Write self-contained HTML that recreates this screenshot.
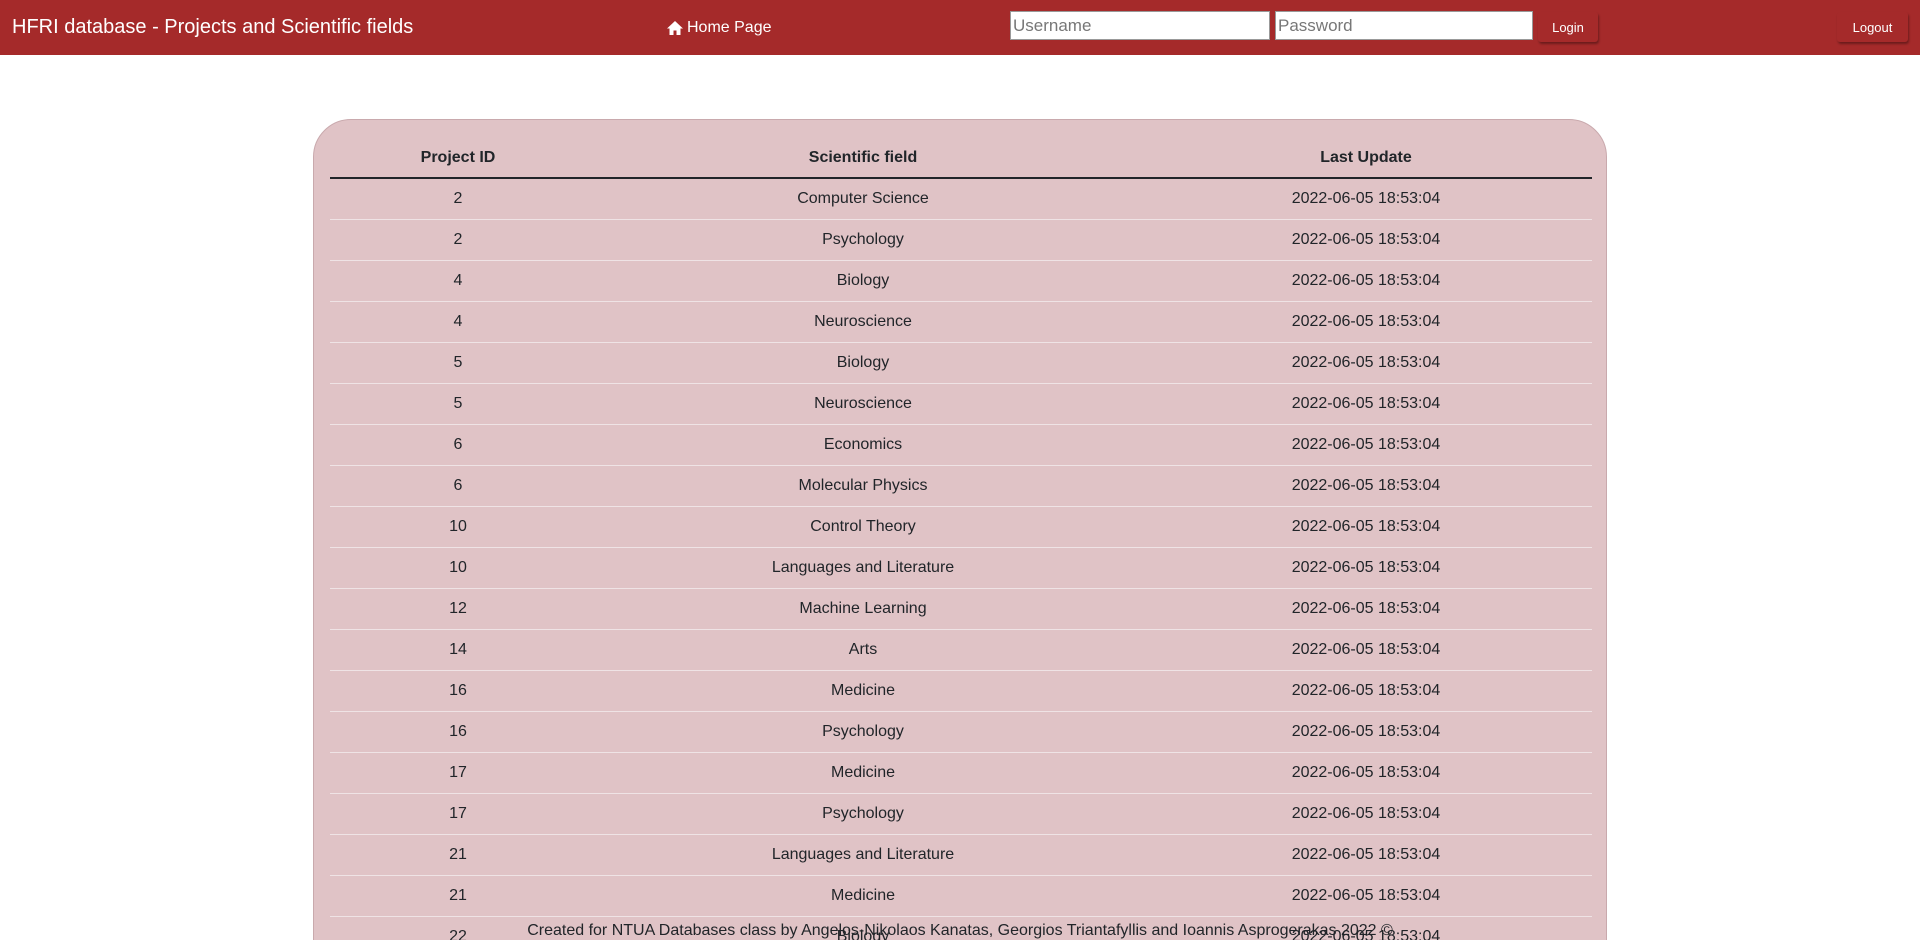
<!DOCTYPE html>
<html style="overflow:hidden;height:940px"><head><meta charset="utf-8"><style>
*{box-sizing:border-box}
body{margin:0;width:1920px;height:940px;overflow:hidden;background:#fff;font-family:"Liberation Sans",sans-serif;color:#212529;position:relative}
.nav{position:absolute;left:0;top:0;width:1920px;height:55px;background:#a52a2a;color:#fff}
.title{position:absolute;left:12px;top:16px;font-size:20px}
.home{position:absolute;left:666px;top:19px;font-size:16px;display:flex;align-items:center;gap:3px}
.inp{position:absolute;top:11px;height:29px;background:#fff;border:1px solid #999;font-size:17px;color:#777;padding:4px 2px;line-height:20px}
.btn{position:absolute;top:12px;height:30px;background:#a52a2a;color:#fff;font-size:13px;text-align:center;line-height:31px;border-radius:3px;box-shadow:1px 2px 2px rgba(0,0,0,.35)}
.box{position:absolute;left:313px;top:119px;width:1294px;height:900px;background:#e0c3c6;border:1px solid #c9a9ad;border-radius:38px}
table{position:absolute;left:16px;top:0;width:1262px;border-collapse:collapse;font-size:16px}
th{height:58px;padding-top:20px;font-weight:bold;border-bottom:2px solid #212529}
td{height:41px;text-align:center;border-bottom:1px solid #efe3e5}
.foot{position:absolute;left:0;width:1920px;top:922px;text-align:center;font-size:16px;color:#212529}
</style></head><body>
<div class="nav">
<div class="title">HFRI database - Projects and Scientific fields</div>
<div class="home"><svg width="18" height="16" viewBox="0 0 18 16"><path d="M9 1L1 8.5h2.5V15h4v-4.5h3V15h4V8.5H17z" fill="#fff"/></svg>Home Page</div>
<div class="inp" style="left:1010px;width:260px">Username</div>
<div class="inp" style="left:1275px;width:258px">Password</div>
<div class="btn" style="left:1538px;width:60px">Login</div>
<div class="btn" style="left:1837px;width:71px">Logout</div>
</div>
<div class="box"><table>
<colgroup><col style="width:256px"><col style="width:554px"><col style="width:452px"></colgroup>
<tr><th>Project ID</th><th>Scientific field</th><th>Last Update</th></tr>
<tr><td>2</td><td>Computer Science</td><td>2022-06-05 18:53:04</td></tr>
<tr><td>2</td><td>Psychology</td><td>2022-06-05 18:53:04</td></tr>
<tr><td>4</td><td>Biology</td><td>2022-06-05 18:53:04</td></tr>
<tr><td>4</td><td>Neuroscience</td><td>2022-06-05 18:53:04</td></tr>
<tr><td>5</td><td>Biology</td><td>2022-06-05 18:53:04</td></tr>
<tr><td>5</td><td>Neuroscience</td><td>2022-06-05 18:53:04</td></tr>
<tr><td>6</td><td>Economics</td><td>2022-06-05 18:53:04</td></tr>
<tr><td>6</td><td>Molecular Physics</td><td>2022-06-05 18:53:04</td></tr>
<tr><td>10</td><td>Control Theory</td><td>2022-06-05 18:53:04</td></tr>
<tr><td>10</td><td>Languages and Literature</td><td>2022-06-05 18:53:04</td></tr>
<tr><td>12</td><td>Machine Learning</td><td>2022-06-05 18:53:04</td></tr>
<tr><td>14</td><td>Arts</td><td>2022-06-05 18:53:04</td></tr>
<tr><td>16</td><td>Medicine</td><td>2022-06-05 18:53:04</td></tr>
<tr><td>16</td><td>Psychology</td><td>2022-06-05 18:53:04</td></tr>
<tr><td>17</td><td>Medicine</td><td>2022-06-05 18:53:04</td></tr>
<tr><td>17</td><td>Psychology</td><td>2022-06-05 18:53:04</td></tr>
<tr><td>21</td><td>Languages and Literature</td><td>2022-06-05 18:53:04</td></tr>
<tr><td>21</td><td>Medicine</td><td>2022-06-05 18:53:04</td></tr>
<tr><td>22</td><td>Biology</td><td>2022-06-05 18:53:04</td></tr>
</table></div>
<div class="foot">Created for NTUA Databases class by Angelos-Nikolaos Kanatas, Georgios Triantafyllis and Ioannis Asprogerakas 2022 ©</div>
</body></html>
